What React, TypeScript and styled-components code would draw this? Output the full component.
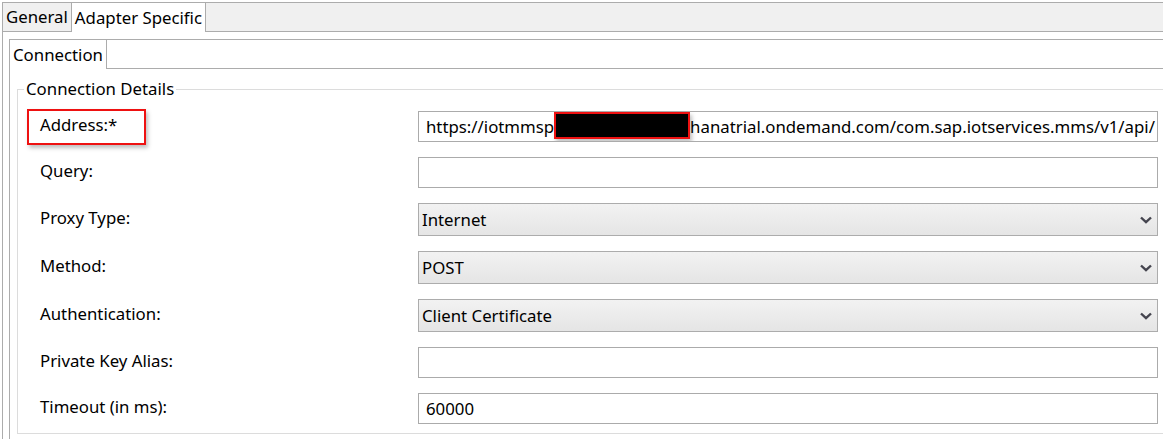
import { Fragment } from 'react';
import styled, { createGlobalStyle } from 'styled-components';

const GlobalStyle = createGlobalStyle`
  html, body {
    margin: 0;
    padding: 0;
    background: #ffffff;
    overflow: hidden;
  }
  body {
    font-family: "Noto Sans", "Open Sans", sans-serif;
    font-size: 16.8px;
    color: #000000;
  }
`;

const Page = styled.div`
  width: 1200px;
  height: 439px;
  overflow: hidden;
  padding-top: 2px;
  box-sizing: border-box;
`;

const TabStrip = styled.div`
  display: flex;
  height: 30px;
  margin-left: 2px;
  border-bottom: 1px solid #acacac;
  box-sizing: border-box;
`;

const Tab = styled.div<{ $active?: boolean; $first?: boolean }>`
  display: flex;
  align-items: center;
  padding: 0 3px;
  border: 1px solid #acacac;
  border-bottom: none;
  border-left: ${p => (p.$first ? '1px solid #acacac' : 'none')};
  background: ${p => (p.$active ? '#ffffff' : '#f0f0f0')};
  margin-bottom: ${p => (p.$active ? '-1px' : '0')};
  line-height: 20px;
  white-space: nowrap;
`;

const TabFiller = styled.div<{ $white?: boolean }>`
  flex: 1;
  border-top: 1px solid #acacac;
  background: ${p => (p.$white ? '#ffffff' : '#f0f0f0')};
`;

const OuterPanel = styled.div`
  margin-left: 2px;
  border-left: 1px solid #acacac;
  padding: 7px 0 0 6px;
  height: 420px;
`;

const InnerStrip = styled.div`
  display: flex;
  height: 30px;
  border-bottom: 1px solid #acacac;
  box-sizing: border-box;
`;

const InnerPanel = styled.div`
  border-left: 1px solid #acacac;
  padding: 10px 0 0 7px;
  height: 400px;
`;

const Group = styled.fieldset`
  margin: 0;
  padding: 12px 0 9px 22px;
  width: 1160px;
  border: 1px solid #dcdcdc;
  box-sizing: border-box;
`;

const Legend = styled.legend`
  margin-left: -16px;
  padding: 0 2px;
  line-height: 20px;
`;

const Form = styled.div`
  display: grid;
  grid-template-columns: 378px 740px;
  row-gap: 15px;
  align-items: center;
`;

const Label = styled.div<{ $highlight?: boolean }>`
  position: relative;
  line-height: 20px;
  margin-top: -3px;

  ${p =>
    p.$highlight &&
    `
    &::before {
      content: '';
      position: absolute;
      left: -13px;
      top: -6px;
      width: 119px;
      height: 36px;
      box-sizing: border-box;
      border: 2px solid #ee1111;
      box-shadow: 2px 3px 4px rgba(0, 0, 0, 0.25);
    }
  `}
`;

const TextBox = styled.div`
  height: 31px;
  box-sizing: border-box;
  border: 1px solid #ababab;
  background: #ffffff;
  padding: 0 7px;
  display: flex;
  align-items: center;
  white-space: nowrap;
  overflow: hidden;
`;

const SelectBox = styled.div`
  height: 33px;
  box-sizing: border-box;
  border: 1px solid #acacac;
  background: linear-gradient(#f2f2f2, #e5e5e5);
  padding: 0 5px 0 3px;
  display: flex;
  align-items: center;
  justify-content: space-between;
`;

const Redacted = styled.span`
  display: inline-block;
  flex: none;
  width: 136px;
  height: 27px;
  box-sizing: border-box;
  background: #000000;
  border: 2px solid #ee1111;
  box-shadow: 2px 3px 4px rgba(0, 0, 0, 0.25);
  margin-top: -2px;
`;

const Chevron = () => (
  <svg width="12" height="8" viewBox="0 0 12 8">
    <path d="M1 1.5 L6 6.2 L11 1.5" fill="none" stroke="#45454f" strokeWidth="2.4" />
  </svg>
);

type Field = {
  label: string;
  kind: 'text' | 'select';
  value?: string;
};

const fields: Field[] = [
  { label: 'Query:', kind: 'text' },
  { label: 'Proxy Type:', kind: 'select', value: 'Internet' },
  { label: 'Method:', kind: 'select', value: 'POST' },
  { label: 'Authentication:', kind: 'select', value: 'Client Certificate' },
  { label: 'Private Key Alias:', kind: 'text' },
  { label: 'Timeout (in ms):', kind: 'text', value: '60000' },
];

export default function App() {
  return (
    <Page>
      <GlobalStyle />
      <TabStrip>
        <Tab $first>General</Tab>
        <Tab $active>Adapter Specific</Tab>
        <TabFiller />
      </TabStrip>
      <OuterPanel>
        <InnerStrip>
          <Tab $first $active>Connection</Tab>
          <TabFiller $white />
        </InnerStrip>
        <InnerPanel>
          <Group>
            <Legend>Connection Details</Legend>
            <Form>
              <Label $highlight>Address:*</Label>
              <TextBox>
                <span>https://iotmmsp</span>
                <Redacted />
                <span>hanatrial.ondemand.com/com.sap.iotservices.mms/v1/api/</span>
              </TextBox>
              {fields.map(f => (
                <Fragment key={f.label}>
                  <Label>{f.label}</Label>
                  {f.kind === 'text' ? (
                    <TextBox>{f.value}</TextBox>
                  ) : (
                    <SelectBox>
                      <span>{f.value}</span>
                      <Chevron />
                    </SelectBox>
                  )}
                </Fragment>
              ))}
            </Form>
          </Group>
        </InnerPanel>
      </OuterPanel>
    </Page>
  );
}
